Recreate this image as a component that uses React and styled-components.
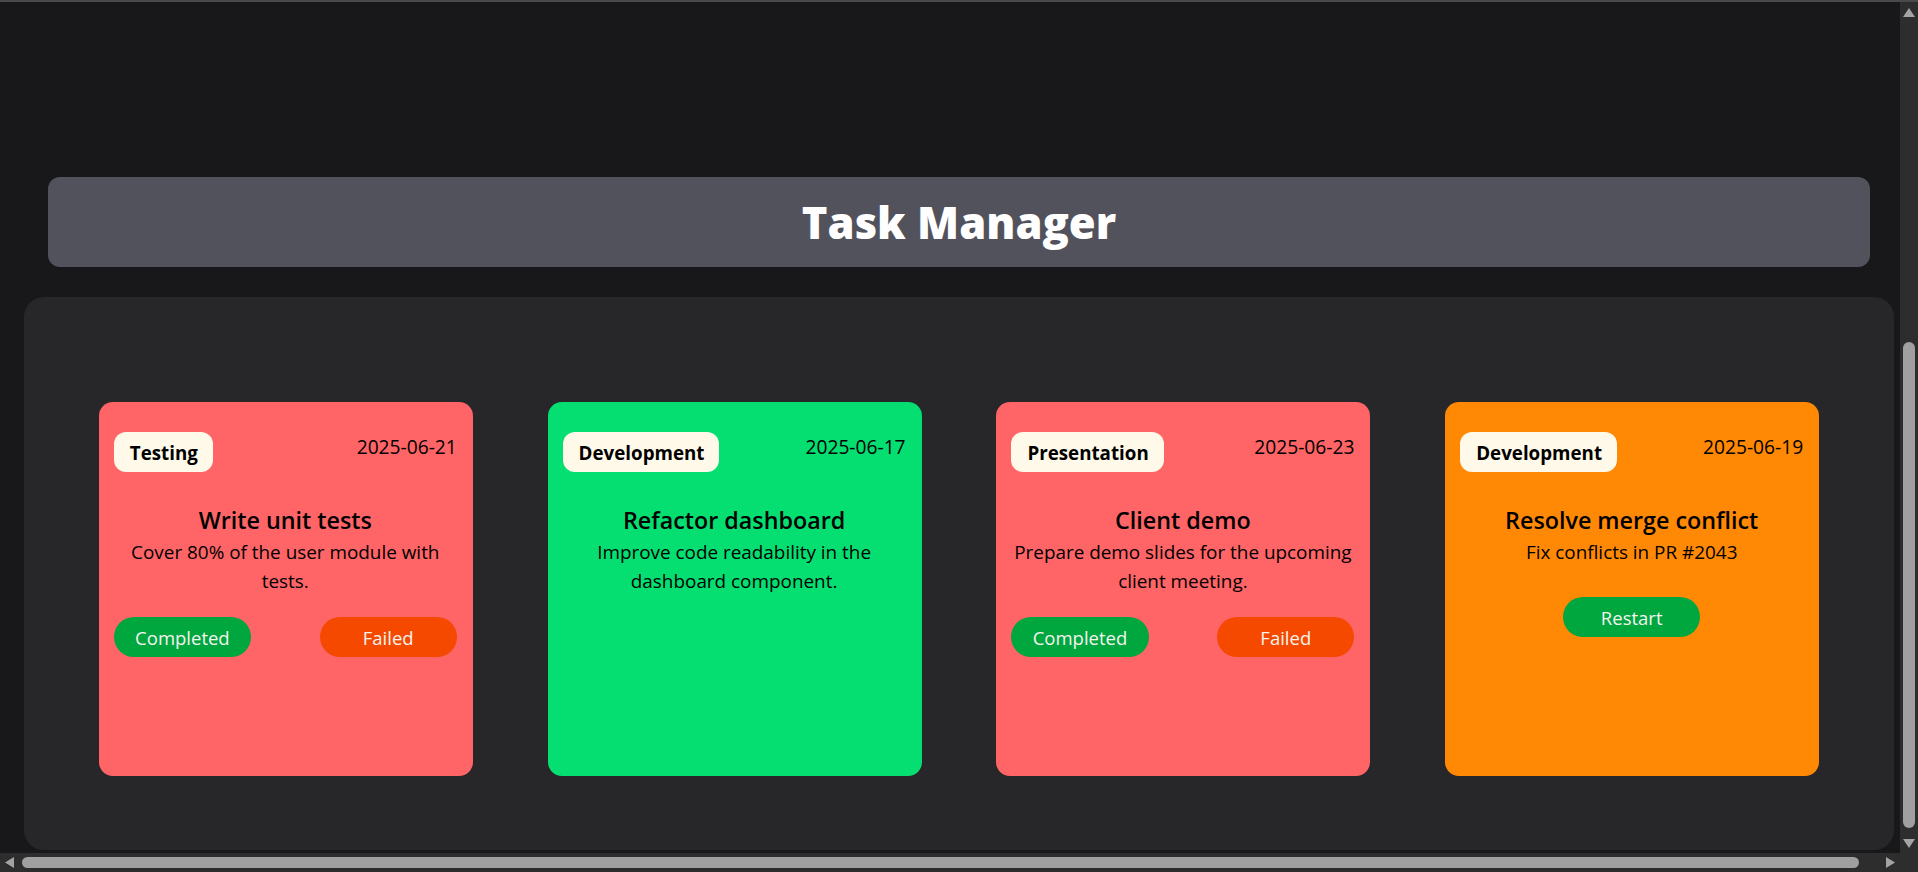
import React from 'react';
import styled, { createGlobalStyle, css } from 'styled-components';

const tones = {
  red: '#ff6467',
  green: '#05df72',
  orange: '#ff8904',
};

const GlobalStyle = createGlobalStyle`
  html {
    color-scheme: dark;
  }

  body {
    margin: 0;
    background-color: #18181b;
    font-family: 'Open Sans', 'Noto Sans', sans-serif;
  }
`;

const Page = styled.div`
  width: 100vw;
  padding: 177px 0 5px;
  display: flex;
  flex-direction: column;
  gap: 30px;
`;

const Header = styled.header`
  margin: 0 48px;
  height: 90px;
  display: flex;
  align-items: center;
  justify-content: center;
  border-radius: 12px;
  background-color: #52525c;
`;

const Heading = styled.h1`
  margin: 0;
  font-size: 43.5px;
  font-weight: 800;
  color: #fff;
`;

const Board = styled.main`
  margin: 0 24px;
  padding: 105px 0 74px;
  display: flex;
  justify-content: space-evenly;
  border-radius: 20px;
  background-color: #27272a;
`;

const Card = styled.article`
  width: 20%;
  aspect-ratio: 1;
  box-sizing: border-box;
  padding: 30px 16px 0 15px;
  display: flex;
  flex-direction: column;
  border-radius: 14px;
  background-color: ${({ $tone }) => tones[$tone]};
  color: #000;
`;

const CardTop = styled.div`
  display: flex;
  justify-content: space-between;
  align-items: flex-start;
`;

const Tag = styled.span`
  height: 40px;
  padding: 0 15px 0 16px;
  display: flex;
  align-items: center;
  border-radius: 12px;
  background-color: #fef9e8;
  font-size: 18.75px;
  font-weight: 700;
`;

const Due = styled.span`
  padding-top: 1px;
  font-size: 19.2px;
`;

const TaskTitle = styled.h2`
  margin: 32px 0 0;
  font-size: 23.3px;
  line-height: 32px;
  font-weight: 600;
  text-align: center;
`;

const TaskText = styled.p`
  margin: 2px 0 0;
  font-size: 18.9px;
  line-height: 29px;
  text-align: center;
`;

const Actions = styled.div`
  margin-top: ${({ $single }) => ($single ? '30px' : '21px')};
  display: flex;
  justify-content: ${({ $single }) => ($single ? 'center' : 'space-between')};
`;

const StatusButton = styled.button`
  width: 40%;
  height: 40px;
  border: 0;
  border-radius: 999px;
  background-color: ${({ $kind }) => ($kind === 'fail' ? '#f54900' : '#00a63e')};
  color: #f5f5ef;
  font-family: inherit;
  font-size: 18.5px;
`;

/* browser chrome seen in the capture: frame line and scrollbars */
const FrameLine = styled.div`
  position: fixed;
  top: 0;
  left: 0;
  right: 0;
  height: 2px;
  background-color: #4a4a4a;
`;

const ScrollBar = styled.div`
  position: fixed;
  display: flex;
  align-items: center;
  box-sizing: border-box;
  background-color: #2d2d2d;

  ${({ $axis }) =>
    $axis === 'y'
      ? css`
          top: 2px;
          right: 0;
          bottom: 0;
          width: 18px;
          padding-bottom: 19px;
          flex-direction: column;
        `
      : css`
          left: 0;
          bottom: 0;
          width: calc(100% - 18px);
          height: 19px;
        `}
`;

const ArrowBox = styled.span`
  flex: none;
  width: ${({ $axis }) => ($axis === 'y' ? '18px' : '19px')};
  height: ${({ $axis }) => ($axis === 'y' ? '20px' : '19px')};
  display: flex;
  align-items: center;
  justify-content: center;
`;

const Track = styled.div`
  flex: 1;
  align-self: stretch;
  display: flex;
  flex-direction: ${({ $axis }) => ($axis === 'y' ? 'column' : 'row')};
  justify-content: ${({ $axis }) => ($axis === 'y' ? 'flex-end' : 'flex-start')};
  align-items: center;
`;

const Thumb = styled.div`
  border-radius: 999px;
  background-color: #a0a0a0;

  ${({ $axis }) =>
    $axis === 'y'
      ? css`
          width: 12px;
          height: 486px;
          margin-bottom: 5px;
        `
      : css`
          width: 1837px;
          height: 11px;
          margin-left: 3px;
        `}
`;

const arrowPoints = {
  up: '0,9 6,0 12,9',
  down: '0,0 12,0 6,9',
  left: '9,0 9,11 0,5.5',
  right: '0,0 9,5.5 0,11',
};

function Arrow({ dir }) {
  const flat = dir === 'up' || dir === 'down';
  const w = flat ? 12 : 9;
  const h = flat ? 9 : 11;
  return (
    <svg width={w} height={h} viewBox={`0 0 ${w} ${h}`}>
      <polygon points={arrowPoints[dir]} fill='#a3a3a3' />
    </svg>
  );
}

const tasks = [
  {
    tag: 'Testing',
    date: '2025-06-21',
    title: 'Write unit tests',
    text: 'Cover 80% of the user module with tests.',
    tone: 'red',
    actions: ['Completed', 'Failed'],
  },
  {
    tag: 'Development',
    date: '2025-06-17',
    title: 'Refactor dashboard',
    text: 'Improve code readability in the dashboard component.',
    tone: 'green',
    actions: [],
  },
  {
    tag: 'Presentation',
    date: '2025-06-23',
    title: 'Client demo',
    text: 'Prepare demo slides for the upcoming client meeting.',
    tone: 'red',
    actions: ['Completed', 'Failed'],
  },
  {
    tag: 'Development',
    date: '2025-06-19',
    title: 'Resolve merge conflict',
    text: 'Fix conflicts in PR #2043',
    tone: 'orange',
    actions: ['Restart'],
  },
];

function TaskCard({ task }) {
  const single = task.actions.length === 1;
  return (
    <Card $tone={task.tone}>
      <CardTop>
        <Tag>{task.tag}</Tag>
        <Due>{task.date}</Due>
      </CardTop>
      <TaskTitle>{task.title}</TaskTitle>
      <TaskText>{task.text}</TaskText>
      {task.actions.length > 0 && (
        <Actions $single={single}>
          {task.actions.map((label) => (
            <StatusButton key={label} $kind={label === 'Failed' ? 'fail' : 'ok'}>
              {label}
            </StatusButton>
          ))}
        </Actions>
      )}
    </Card>
  );
}

export default function App() {
  return (
    <>
      <GlobalStyle />
      <Page>
        <Header>
          <Heading>Task Manager</Heading>
        </Header>
        <Board>
          {tasks.map((task) => (
            <TaskCard key={task.title} task={task} />
          ))}
        </Board>
      </Page>

      <FrameLine />
      <ScrollBar $axis='y'>
        <ArrowBox $axis='y'>
          <Arrow dir='up' />
        </ArrowBox>
        <Track $axis='y'>
          <Thumb $axis='y' />
        </Track>
        <ArrowBox $axis='y'>
          <Arrow dir='down' />
        </ArrowBox>
      </ScrollBar>
      <ScrollBar $axis='x'>
        <ArrowBox $axis='x'>
          <Arrow dir='left' />
        </ArrowBox>
        <Track $axis='x'>
          <Thumb $axis='x' />
        </Track>
        <ArrowBox $axis='x'>
          <Arrow dir='right' />
        </ArrowBox>
      </ScrollBar>
    </>
  );
}
